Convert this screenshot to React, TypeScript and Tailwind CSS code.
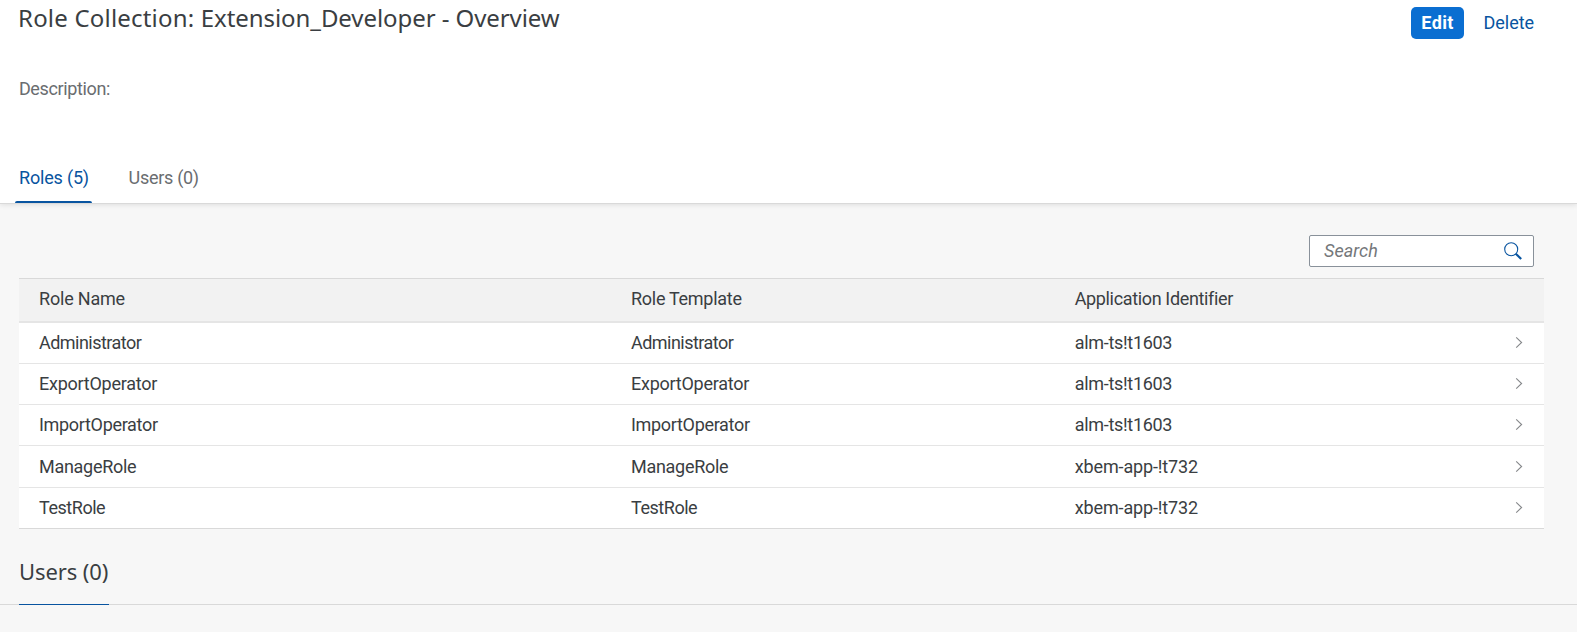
type Cell = { text: string; tracking: string };

const administrator: Cell = { text: "Administrator", tracking: "tracking-[-0.53px]" };
const exportOperator: Cell = { text: "ExportOperator", tracking: "tracking-[-0.25px]" };
const importOperator: Cell = { text: "ImportOperator", tracking: "tracking-[-0.32px]" };
const manageRole: Cell = { text: "ManageRole", tracking: "tracking-[-0.28px]" };
const testRole: Cell = { text: "TestRole", tracking: "tracking-[-0.46px]" };
const almApp: Cell = { text: "alm-ts!t1603", tracking: "tracking-[-0.3px]" };
const xbemApp: Cell = { text: "xbem-app-!t732", tracking: "tracking-[-0.13px]" };

const rows: { role: Cell; app: Cell; size: string }[] = [
  { role: administrator, app: almApp, size: "h-[41px] pt-[9px] border-[#e5e5e5]" },
  { role: exportOperator, app: almApp, size: "h-[41px] pt-[9px] border-[#e5e5e5]" },
  { role: importOperator, app: almApp, size: "h-[41px] pt-[9px] border-[#e5e5e5]" },
  { role: manageRole, app: xbemApp, size: "h-[42px] pt-[10px] border-[#e5e5e5]" },
  { role: testRole, app: xbemApp, size: "h-[41px] pt-[9px] border-[#d9d9d9]" },
];

const columns = "grid grid-cols-[592px_443.7px_1fr_28.6px] pl-[20px]";

function Chevron() {
  return (
    <svg className="mt-[5px] h-[11px] w-2" viewBox="0 0 8 11" fill="none" stroke="#85878a" strokeWidth="1.1">
      <path d="M1.2 0.4 6.6 5.5 1.2 10.6" />
    </svg>
  );
}

function SearchIcon() {
  return (
    <svg className="h-[18px] w-[18px] shrink-0" viewBox="0 0 18 18" fill="none" stroke="#0854a0">
      <circle cx="7.2" cy="7.2" r="6.5" strokeWidth="1.1" />
      <path d="M11.8 11.8 17.2 17" strokeWidth="2.2" />
    </svg>
  );
}

export default function App() {
  return (
    <div className="h-[632px] w-full overflow-hidden bg-[#f7f7f7] font-['Roboto','Liberation_Sans',sans-serif] text-[18px] leading-[21px] text-[#3a3e42]">
      <header className="relative flex h-[203px] flex-col bg-white shadow-[0_1px_0_0_#d9d9d9,0_2px_5px_0_rgba(0,0,0,0.1)]">
        <div className="flex h-[78px] items-start justify-between pr-[43px] pl-[18px]">
          <h1 className="mt-px font-['Noto_Sans',sans-serif] text-[24px] leading-[33px] tracking-[-0.07px]">
            <span className="tracking-[0.2px]">Role Collection: </span>Extension_Developer - Overview
          </h1>
          <div className="mt-[7px] flex items-start">
            <button className="flex h-8 w-[53px] justify-center rounded-[5px] bg-[#0a6ed1] pt-[5px] pl-px font-bold tracking-[0.4px] text-white">
              Edit
            </button>
            <button className="ml-[20px] pt-[5px] tracking-[-0.05px] text-[#0854a0]">Delete</button>
          </div>
        </div>
        <p className="pl-[18.9px] tracking-[-0.37px] text-[#6a6d70]">Description:</p>
        <nav className="mt-[68px] flex pl-[15px]">
          <div className="flex w-[77px] flex-col text-[#0854a0]">
            <span className="h-[34px] pl-[4px] tracking-[-0.18px]">Roles (5)</span>
            <span className="h-[2px] rounded-t-[2px] bg-[#0854a0]" />
          </div>
          <span className="pl-[36.6px] tracking-[-0.3px] text-[#6a6d70]">Users (0)</span>
        </nav>
      </header>

      <main>
        <div className="flex h-[75px] justify-end pt-8 pr-[43px]">
          <label className="flex h-8 w-[225px] items-center rounded-[2px] border border-[#89919a] bg-white pr-[11px] pl-[14px]">
            <input
              placeholder="Search"
              className="h-full min-w-0 flex-1 pb-px tracking-[0.05px] italic outline-none placeholder:text-[#74777a]"
            />
            <SearchIcon />
          </label>
        </div>

        <section className="ml-[19px] w-[1525px]">
          <div className={`${columns} h-[45px] border-t border-b-2 border-t-[#d9d9d9] border-b-[#e5e5e5] bg-[#f2f2f2] pt-[9px]`}>
            <span className="tracking-[-0.2px]">Role Name</span>
            <span className="tracking-[-0.28px]">Role Template</span>
            <span className="tracking-[-0.35px]">Application Identifier</span>
          </div>
          {rows.map(({ role, app, size }) => (
            <div key={role.text} className={`${columns} ${size} border-b bg-white`}>
              <span className={role.tracking}>{role.text}</span>
              <span className={role.tracking}>{role.text}</span>
              <span className={app.tracking}>{app.text}</span>
              <Chevron />
            </div>
          ))}
        </section>

        <div className="mt-[27px] flex h-[49px] border-b border-[#d9d9d9] pl-[19px]">
          <h2 className="-mb-px h-[49px] w-[90px] border-b border-[#0854a0] font-['Noto_Sans',sans-serif] text-[22px] leading-[30px] tracking-[-0.1px] whitespace-nowrap">
            Users (0)
          </h2>
        </div>
      </main>
    </div>
  );
}
